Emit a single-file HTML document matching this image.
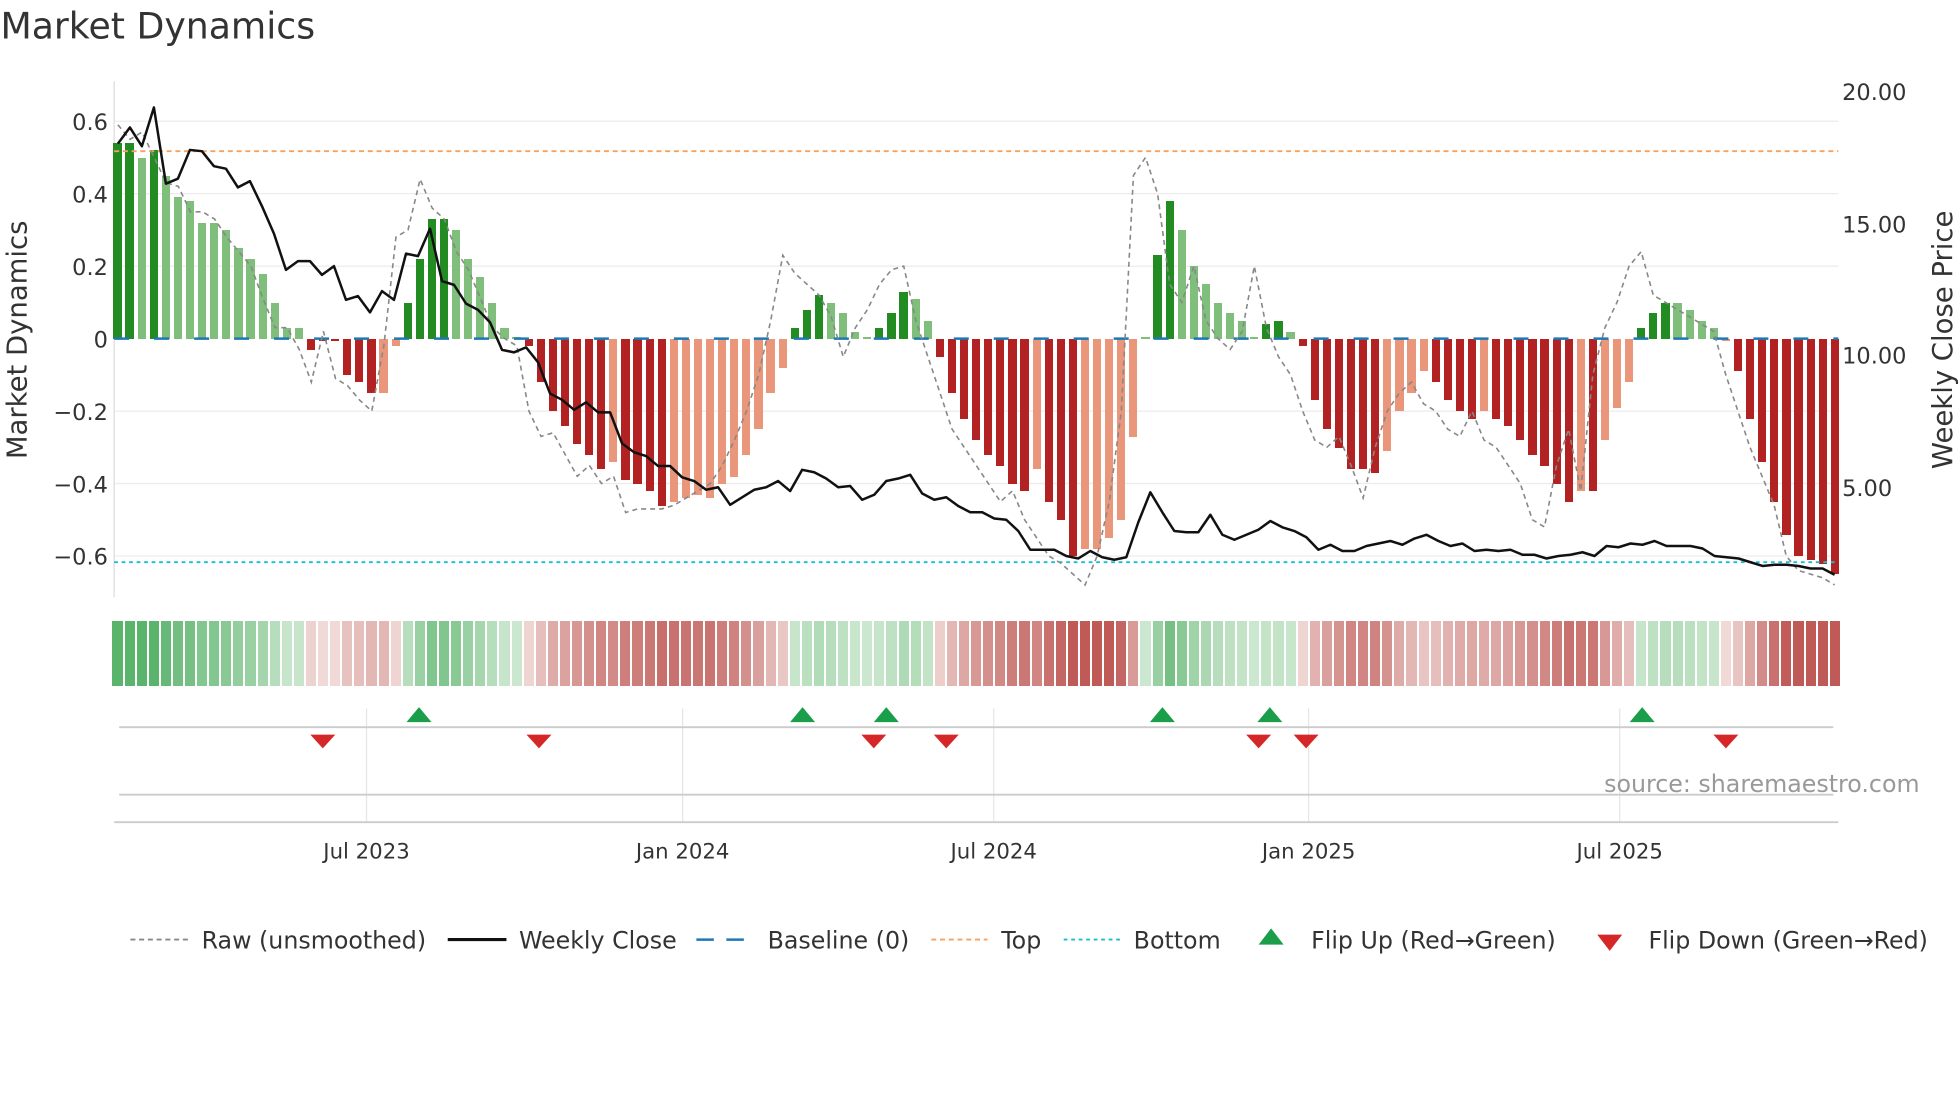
<!DOCTYPE html>
<html><head><meta charset="utf-8"><style>
html,body{margin:0;padding:0;background:#fff;}
body{position:relative;width:1960px;height:1102px;overflow:hidden;}
svg{display:block;position:absolute;left:0;top:0;font-family:"DejaVu Sans","Liberation Sans",sans-serif;}
#bars{position:absolute;left:111.45px;width:1729.6px;top:338.75px;height:0;display:flex;}
#bars i{flex:1;position:relative;height:0;display:block;}
#bars i::before{content:"";position:absolute;left:50%;margin-left:-4.1px;width:8.2px;}
#bars .p::before{bottom:0;height:calc(var(--v) * 362.5px);}
#bars .n::before{top:0;height:calc(var(--v) * -362.5px);}
#bars .p.d::before{background:#228b22;}
#bars .p.l::before{background:#7fbf7b;}
#bars .n.d::before{background:#b22222;}
#bars .n.l::before{background:#e9967a;}
#bars i::after{content:"";position:absolute;top:282.5px;height:65px;left:1px;right:1px;}
#bars .p::after{background:rgb(calc(205 - 115 * min(var(--v) / .5, 1)), calc(232 - 52 * min(var(--v) / .5, 1)), calc(208 - 100 * min(var(--v) / .5, 1)));}
#bars .n::after{background:rgb(calc(240 - 48 * min(var(--v) / -.55, 1)), calc(218 - 128 * min(var(--v) / -.55, 1)), calc(215 - 128 * min(var(--v) / -.55, 1)));}
</style></head><body>
<svg width="1960" height="1102" viewBox="0 0 1568 882" xmlns="http://www.w3.org/2000/svg">
<rect width="1568" height="882" fill="#fff"/>
<text x="0" y="31" font-size="29" fill="#333">Market Dynamics</text>
<g stroke="#ececec" stroke-width="1">
<line x1="91" x2="1471" y1="97" y2="97"/><line x1="91" x2="1471" y1="155" y2="155"/><line x1="91" x2="1471" y1="213" y2="213"/><line x1="91" x2="1471" y1="329" y2="329"/><line x1="91" x2="1471" y1="387" y2="387"/><line x1="91" x2="1471" y1="445" y2="445"/>
</g>
<line x1="91" x2="91" y1="65" y2="478" stroke="#ddd"/>
<g font-size="18" fill="#333" text-anchor="end">
<text x="86" y="104">0.6</text><text x="86" y="162">0.4</text><text x="86" y="220">0.2</text><text x="86" y="278">0</text><text x="86" y="336">−0.2</text><text x="86" y="394">−0.4</text><text x="86" y="452">−0.6</text>
</g>
<g font-size="18" fill="#333">
<text x="1474" y="80">20.00</text><text x="1474" y="186">15.00</text><text x="1474" y="291">10.00</text><text x="1474" y="397">5.00</text>
</g>
<text transform="translate(21,272) rotate(-90)" font-size="22" fill="#333" text-anchor="middle">Market Dynamics</text>
<text transform="translate(1562,272) rotate(-90)" font-size="22" fill="#333" text-anchor="middle">Weekly Close Price</text>
<g stroke="#e6e6e6"><line x1="293" x2="293" y1="567" y2="658"/><line x1="546" x2="546" y1="567" y2="658"/><line x1="795" x2="795" y1="567" y2="658"/><line x1="1047" x2="1047" y1="567" y2="658"/><line x1="1296" x2="1296" y1="567" y2="658"/></g>
<line x1="95" x2="1467" y1="582" y2="582" stroke="#ccc" stroke-width="1.5"/>
<line x1="95" x2="1467" y1="636" y2="636" stroke="#ccc" stroke-width="1.5"/>
<line x1="91" x2="1471" y1="658" y2="658" stroke="#ccc" stroke-width="1.5"/>
<text x="1536" y="634" font-size="19" fill="#999" text-anchor="end">source: sharemaestro.com</text>
<g font-size="17" fill="#333" text-anchor="middle">
<text x="293" y="687">Jul 2023</text><text x="546" y="687">Jan 2024</text><text x="795" y="687">Jul 2024</text><text x="1047" y="687">Jan 2025</text><text x="1296" y="687">Jul 2025</text>
</g>
<g font-size="19" fill="#333">
<line x1="104" x2="150" y1="752" y2="752" stroke="#888" stroke-width="1.5" stroke-dasharray="4,3"/><text x="161" y="759">Raw (unsmoothed)</text>
<line x1="358" x2="405" y1="752" y2="752" stroke="#111" stroke-width="2.5"/><text x="415" y="759">Weekly Close</text>
<line x1="557" x2="604" y1="752" y2="752" stroke="#1f77b4" stroke-width="2" stroke-dasharray="14,10"/><text x="614" y="759">Baseline (0)</text>
<line x1="745" x2="790" y1="752" y2="752" stroke="#f4a261" stroke-width="1.5" stroke-dasharray="4,3"/><text x="801" y="759">Top</text>
<line x1="851" x2="896" y1="752" y2="752" stroke="#17becf" stroke-width="1.5" stroke-dasharray="3,3"/><text x="907" y="759">Bottom</text>
<polygon points="1017,743 1027,756 1007,756" fill="#1a9e4a"/><text x="1049" y="759">Flip Up (Red→Green)</text>
<polygon points="1278,748 1298,748 1288,761" fill="#d62728"/><text x="1319" y="759">Flip Down (Green→Red)</text>
</g>
</svg>
<div id="bars">
<i class="p d" style="--v:.54"></i><i class="p d" style="--v:.54"></i><i class="p l" style="--v:.5"></i><i class="p d" style="--v:.52"></i><i class="p l" style="--v:.45"></i><i class="p l" style="--v:.39"></i><i class="p l" style="--v:.38"></i><i class="p l" style="--v:.32"></i><i class="p l" style="--v:.32"></i><i class="p l" style="--v:.3"></i><i class="p l" style="--v:.25"></i><i class="p l" style="--v:.22"></i><i class="p l" style="--v:.18"></i><i class="p l" style="--v:.1"></i><i class="p l" style="--v:.03"></i><i class="p l" style="--v:.03"></i>
<i class="n d" style="--v:-.03"></i><i class="n d" style="--v:-.005"></i><i class="n d" style="--v:-.005"></i><i class="n d" style="--v:-.1"></i><i class="n d" style="--v:-.12"></i><i class="n d" style="--v:-.15"></i><i class="n l" style="--v:-.15"></i><i class="n l" style="--v:-.02"></i>
<i class="p d" style="--v:.1"></i><i class="p d" style="--v:.22"></i><i class="p d" style="--v:.33"></i><i class="p d" style="--v:.33"></i><i class="p l" style="--v:.3"></i><i class="p l" style="--v:.22"></i><i class="p l" style="--v:.17"></i><i class="p l" style="--v:.1"></i><i class="p l" style="--v:.03"></i><i class="p l" style="--v:.005"></i>
<i class="n d" style="--v:-.02"></i><i class="n d" style="--v:-.12"></i><i class="n d" style="--v:-.2"></i><i class="n d" style="--v:-.24"></i><i class="n d" style="--v:-.29"></i><i class="n d" style="--v:-.32"></i><i class="n d" style="--v:-.36"></i><i class="n l" style="--v:-.34"></i><i class="n d" style="--v:-.39"></i><i class="n d" style="--v:-.4"></i><i class="n d" style="--v:-.42"></i><i class="n d" style="--v:-.46"></i><i class="n l" style="--v:-.45"></i><i class="n l" style="--v:-.44"></i><i class="n l" style="--v:-.43"></i><i class="n l" style="--v:-.44"></i><i class="n l" style="--v:-.4"></i><i class="n l" style="--v:-.38"></i><i class="n l" style="--v:-.32"></i><i class="n l" style="--v:-.25"></i><i class="n l" style="--v:-.15"></i><i class="n l" style="--v:-.08"></i>
<i class="p d" style="--v:.03"></i><i class="p d" style="--v:.08"></i><i class="p d" style="--v:.12"></i><i class="p l" style="--v:.1"></i><i class="p l" style="--v:.07"></i><i class="p l" style="--v:.02"></i><i class="p l" style="--v:.005"></i><i class="p d" style="--v:.03"></i><i class="p d" style="--v:.07"></i><i class="p d" style="--v:.13"></i><i class="p l" style="--v:.11"></i><i class="p l" style="--v:.05"></i>
<i class="n d" style="--v:-.05"></i><i class="n d" style="--v:-.15"></i><i class="n d" style="--v:-.22"></i><i class="n d" style="--v:-.28"></i><i class="n d" style="--v:-.32"></i><i class="n d" style="--v:-.35"></i><i class="n d" style="--v:-.4"></i><i class="n d" style="--v:-.42"></i><i class="n l" style="--v:-.36"></i><i class="n d" style="--v:-.45"></i><i class="n d" style="--v:-.5"></i><i class="n d" style="--v:-.6"></i><i class="n l" style="--v:-.58"></i><i class="n l" style="--v:-.58"></i><i class="n l" style="--v:-.55"></i><i class="n l" style="--v:-.5"></i><i class="n l" style="--v:-.27"></i>
<i class="p l" style="--v:.005"></i><i class="p d" style="--v:.23"></i><i class="p d" style="--v:.38"></i><i class="p l" style="--v:.3"></i><i class="p l" style="--v:.2"></i><i class="p l" style="--v:.15"></i><i class="p l" style="--v:.1"></i><i class="p l" style="--v:.07"></i><i class="p l" style="--v:.05"></i><i class="p l" style="--v:.005"></i><i class="p d" style="--v:.04"></i><i class="p d" style="--v:.05"></i><i class="p l" style="--v:.02"></i>
<i class="n d" style="--v:-.02"></i><i class="n d" style="--v:-.17"></i><i class="n d" style="--v:-.25"></i><i class="n d" style="--v:-.3"></i><i class="n d" style="--v:-.36"></i><i class="n d" style="--v:-.36"></i><i class="n d" style="--v:-.37"></i><i class="n l" style="--v:-.31"></i><i class="n l" style="--v:-.2"></i><i class="n l" style="--v:-.15"></i><i class="n l" style="--v:-.09"></i><i class="n d" style="--v:-.12"></i><i class="n d" style="--v:-.17"></i><i class="n d" style="--v:-.2"></i><i class="n d" style="--v:-.22"></i><i class="n l" style="--v:-.2"></i><i class="n d" style="--v:-.22"></i><i class="n d" style="--v:-.24"></i><i class="n d" style="--v:-.28"></i><i class="n d" style="--v:-.32"></i><i class="n d" style="--v:-.35"></i><i class="n d" style="--v:-.4"></i><i class="n d" style="--v:-.45"></i><i class="n l" style="--v:-.42"></i><i class="n d" style="--v:-.42"></i><i class="n l" style="--v:-.28"></i><i class="n l" style="--v:-.19"></i><i class="n l" style="--v:-.12"></i>
<i class="p d" style="--v:.03"></i><i class="p d" style="--v:.07"></i><i class="p d" style="--v:.1"></i><i class="p l" style="--v:.1"></i><i class="p l" style="--v:.08"></i><i class="p l" style="--v:.05"></i><i class="p l" style="--v:.03"></i><i class="n l" style="--v:-.005"></i>
<i class="n d" style="--v:-.09"></i><i class="n d" style="--v:-.22"></i><i class="n d" style="--v:-.34"></i><i class="n d" style="--v:-.45"></i><i class="n d" style="--v:-.54"></i><i class="n d" style="--v:-.6"></i><i class="n d" style="--v:-.61"></i><i class="n d" style="--v:-.62"></i><i class="n d" style="--v:-.65"></i>
</div>
<svg width="1960" height="1102" viewBox="0 0 1568 882" xmlns="http://www.w3.org/2000/svg">
<line x1="91" x2="1471" y1="121" y2="121" stroke="#f4a261" stroke-width="1.5" stroke-dasharray="4,3"/>
<line x1="91" x2="1471" y1="450" y2="450" stroke="#17becf" stroke-width="1.5" stroke-dasharray="3,3"/>
<line x1="91" x2="1471" y1="271" y2="271" stroke="#1f77b4" stroke-width="2" stroke-dasharray="12,20"/>
<svg x="94" y="0" width="1374" height="882" viewBox="0 0 142 882" preserveAspectRatio="none" overflow="visible">
<g transform="translate(0,271) scale(1,-290)">
<polyline fill="none" stroke="#888" stroke-width="1.6" stroke-dasharray="5,4" vector-effect="non-scaling-stroke" points="0,.59 1,.55 2,.57 3,.5 4,.43 5,.42 6,.35 7,.35 8,.33 9,.28 10,.24 11,.2 12,.11 13,.03 14,.03 15,-.03 16,-.12 17,.02 18,-.11 19,-.13 20,-.17 21,-.2 22,-.02 23,.28 24,.3 25,.44 26,.36 27,.33 28,.24 29,.19 30,.11 31,.03 32,0 33,-.02 34,-.2 35,-.27 36,-.26 37,-.32 38,-.38 39,-.35 40,-.4 41,-.38 42,-.48 43,-.47 44,-.47 45,-.47 46,-.46 47,-.44 48,-.42 49,-.4 50,-.35 51,-.28 52,-.2 53,-.1 54,.05 55,.23 56,.18 57,.15 58,.12 59,.06 60,-.05 61,.03 62,.08 63,.15 64,.19 65,.2 66,.05 67,-.05 68,-.15 69,-.25 70,-.3 71,-.35 72,-.4 73,-.45 74,-.42 75,-.5 76,-.55 77,-.6 78,-.62 79,-.65 80,-.68 81,-.6 82,-.45 83,-.2 84,.45 85,.5 86,.4 87,.15 88,.1 89,.2 90,.05 91,0 92,-.03 93,.02 94,.2 95,.03 96,-.05 97,-.1 98,-.2 99,-.28 100,-.3 101,-.27 102,-.35 103,-.44 104,-.3 105,-.2 106,-.15 107,-.12 108,-.18 109,-.2 110,-.25 111,-.27 112,-.2 113,-.28 114,-.3 115,-.35 116,-.4 117,-.5 118,-.52 119,-.35 120,-.25 121,-.42 122,-.1 123,.03 124,.1 125,.2 126,.24 127,.12 128,.1 129,.08 130,.06 131,.04 132,.02 133,-.1 134,-.2 135,-.3 136,-.38 137,-.46 138,-.6 139,-.64 140,-.65 141,-.66 142,-.68"/>
</g>
</svg>
<svg x="94" y="0" width="1374" height="882" viewBox="0 0 143 882" preserveAspectRatio="none" overflow="visible">
<polyline fill="none" stroke="#111" stroke-width="2.5" stroke-linejoin="round" vector-effect="non-scaling-stroke" points="0,115 1,102 2,117 3,86 4,147 5,143 6,120 7,121 8,133 9,135 10,150 11,145 12,165 13,187 14,216 15,209 16,209 17,220 18,213 19,240 20,237 21,250 22,233 23,240 24,203 25,205 26,183 27,225 28,228 29,243 30,248 31,258 32,280 33,282 34,278 35,290 36,315 37,320 38,328 39,322 40,330 41,330 42,355 43,362 44,365 45,373 46,373 47,382 48,385 49,392 50,390 51,404 52,398 53,392 54,390 55,385 56,393 57,376 58,378 59,383 60,390 61,389 62,400 63,396 64,385 65,383 66,380 67,395 68,400 69,398 70,405 71,410 72,410 73,415 74,416 75,425 76,440 77,440 78,440 79,445 80,447 81,441 82,446 83,448 84,446 85,418 86,394 87,410 88,425 89,426 90,426 91,412 92,428 93,432 94,428 95,424 96,417 97,422 98,425 99,430 100,440 101,436 102,441 103,441 104,437 105,435 106,433 107,436 108,431 109,428 110,433 111,437 112,435 113,441 114,440 115,441 116,440 117,444 118,444 119,447 120,445 121,444 122,442 123,445 124,437 125,438 126,435 127,436 128,433 129,437 130,437 131,437 132,439 133,445 134,446 135,447 136,450 137,453 138,452 139,452 140,453 141,455 142,455 143,460"/>
</svg>
<g fill="#1a9e4a">
<polygon points="335,566 345,578 325,578"/><polygon points="642,566 652,578 632,578"/><polygon points="709,566 719,578 699,578"/><polygon points="930,566 940,578 920,578"/><polygon points="1016,566 1026,578 1006,578"/><polygon points="1314,566 1324,578 1304,578"/>
</g>
<g fill="#d62728">
<polygon points="248,588 268,588 258,599"/><polygon points="421,588 441,588 431,599"/><polygon points="689,588 709,588 699,599"/><polygon points="747,588 767,588 757,599"/><polygon points="997,588 1017,588 1007,599"/><polygon points="1035,588 1055,588 1045,599"/><polygon points="1371,588 1391,588 1381,599"/>
</g>
</svg>
</body></html>
